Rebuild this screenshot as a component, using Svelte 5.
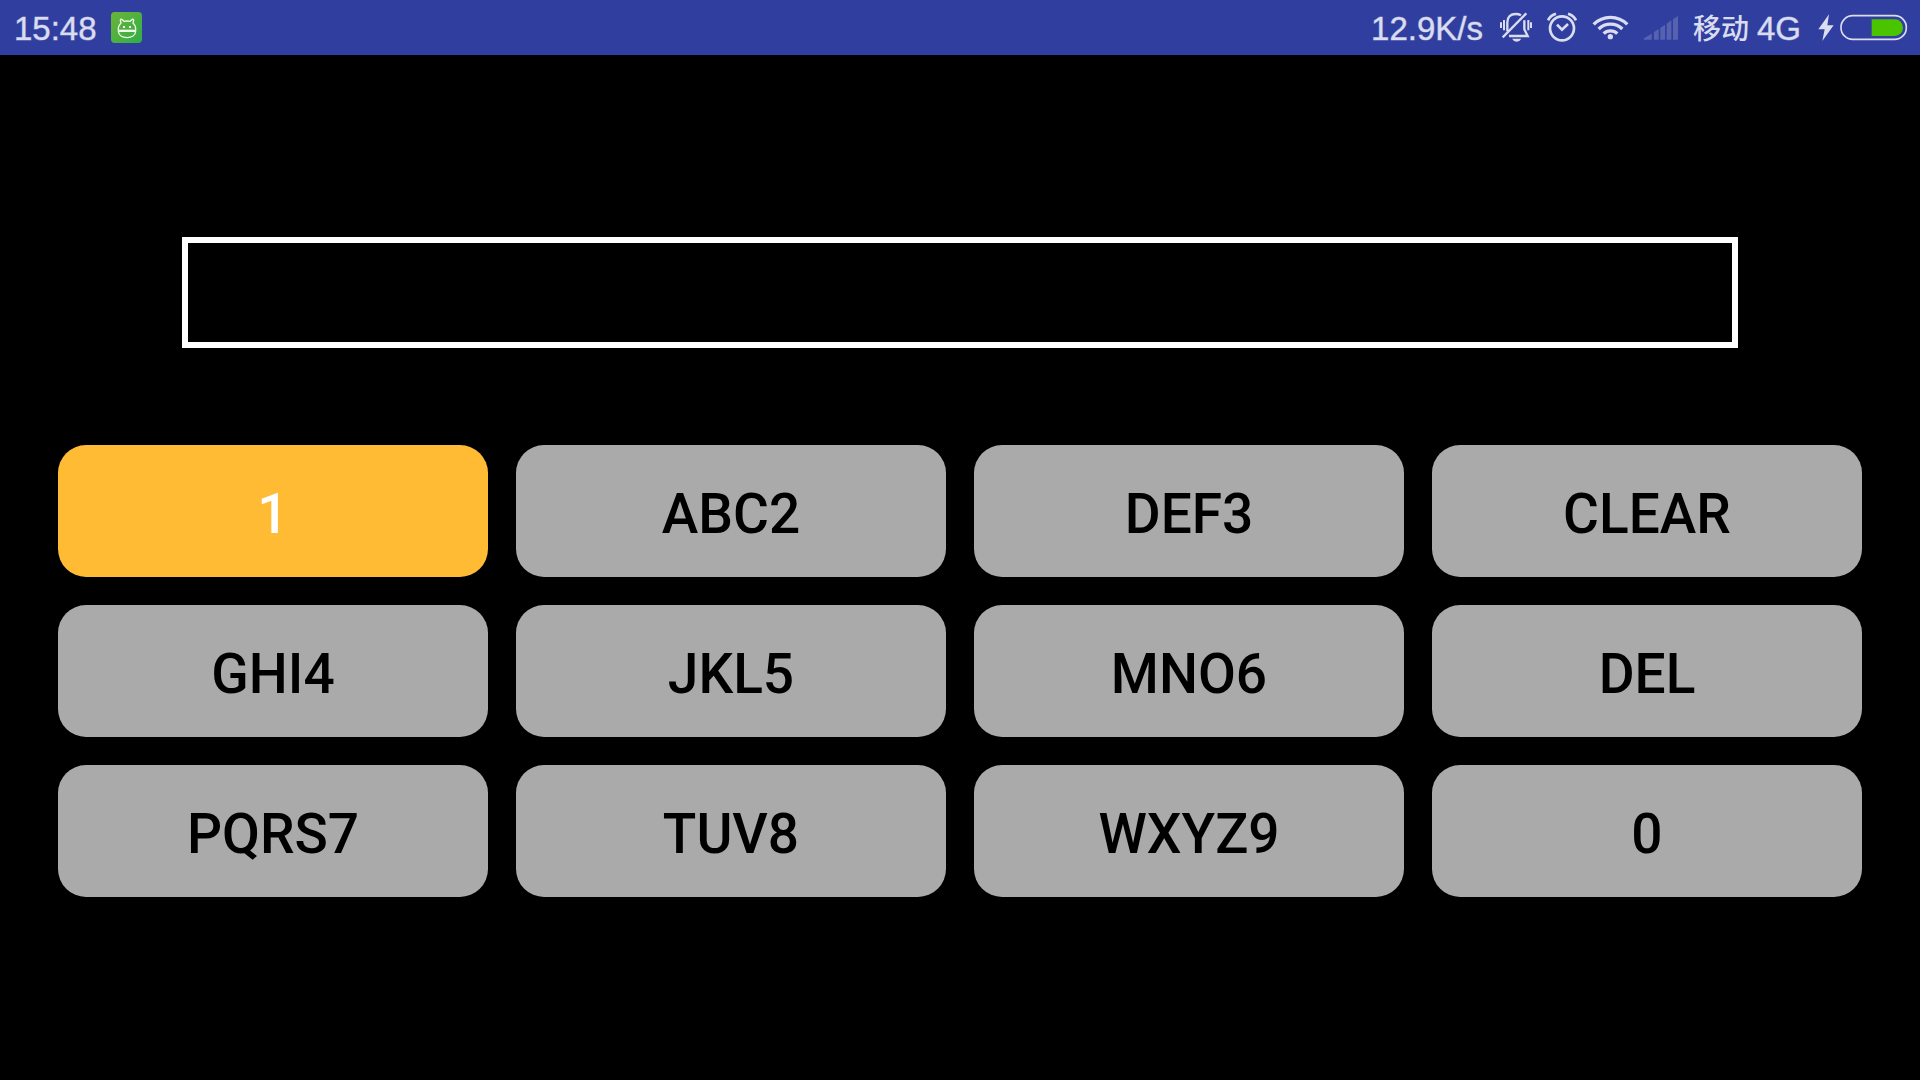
<script>
  const keys = ['1', 'ABC2', 'DEF3', 'CLEAR', 'GHI4', 'JKL5', 'MNO6', 'DEL', 'PQRS7', 'TUV8', 'WXYZ9', '0'];
  let selected = $state('1');
  let value = $state('');

  function press(key) {
    selected = key;
    if (key === 'CLEAR') value = '';
    else if (key === 'DEL') value = value.slice(0, -1);
    else value += key.slice(-1);
  }
</script>

<div class="screen">
  <header class="status">
    <div class="group left">
      <time class="text">15:48</time>
      <svg class="app" width="31" height="55" viewBox="333 0 93 165" aria-hidden="true">
        <defs>
          <linearGradient id="leaf" x1="0" y1="0" x2="1" y2="1">
            <stop offset="0" stop-color="#6cb436" />
            <stop offset="1" stop-color="#30ae48" />
          </linearGradient>
        </defs>
        <rect x="333" y="36" width="93" height="93" rx="11" fill="url(#leaf)" />
        <g fill="none" stroke="#effbe8" stroke-width="4" stroke-linejoin="round">
          <path d="M355 92C354 81 358 74 363 70L361 60Q363 56 367 59L372 64Q381 62 390 64L395 59Q399 56 401 60L399 70C404 74 408 81 407 92" />
          <path d="M355 94H407C406 106 395 113 381 113S356 106 355 94Z" />
          <path d="M355 91H407" />
        </g>
        <path d="M369 78h6v6h-6zM387 78h6v6h-6z" fill="#effbe8" />
      </svg>
    </div>

    <div class="group right">
      <span class="text">12.9K/s</span>
      <svg width="34" height="55" viewBox="24 0 102 165" aria-label="Silent" role="img">
        <g fill="none" stroke="currentColor" stroke-width="7">
          <path d="M109 40L38 112" />
          <path d="M52 94V67C52 51 62 42 77 42Q86 42 93 46" />
          <path d="M103 61V88L113 108H57" />
          <path d="M33 67V84M42 60V91M115 60V91M123 67V84" stroke-width="6" />
        </g>
        <path d="M66 116H94Q89 125 80 125T66 116Z" fill="currentColor" />
      </svg>
      <svg width="30" height="55" viewBox="171 0 90 165" aria-label="Alarm" role="img">
        <g fill="none" stroke="currentColor" stroke-width="8">
          <circle cx="216" cy="85" r="36" />
          <path d="M201 74L216 89L234 72" />
          <path d="M174 61Q181 46 198 41M234 41Q251 46 258 61" />
        </g>
      </svg>
      <svg width="37" height="55" viewBox="36 0 111 165" aria-label="Wi-Fi" role="img">
        <g fill="none" stroke="currentColor" stroke-width="10">
          <path d="M41 73A71 71 0 0 1 142 73" />
          <path d="M56 87A50 50 0 0 1 127 87" />
          <path d="M71 101A29 29 0 0 1 112 101" />
        </g>
        <circle cx="91" cy="110" r="8" fill="currentColor" />
      </svg>
      <svg width="34" height="55" viewBox="192 0 102 165" aria-label="No signal" role="img">
        <path
          d="M192 119V115L215 101V119ZM222 96L236 87V119H222ZM241 84L255 74V119H241ZM260 71L274 61V119H260ZM279 58L294 48V119H279Z"
          fill="#5662b0"
        />
      </svg>
      <span class="carrier"><span class="cjk" lang="zh-CN">移动</span><span class="text">4G</span></span>
      <svg width="92" height="55" viewBox="408 0 276 165" aria-label="Battery charging" role="img">
        <path d="M447 43L415 88H434L427 123L461 76H442Z" fill="currentColor" />
        <rect x="483" y="47" width="196" height="71" rx="35" fill="none" stroke="currentColor" stroke-width="5" />
        <path d="M575 58H645A24 25 0 0 1 645 108H575Z" fill="#4bc400" />
      </svg>
    </div>
  </header>

  <main>
    <input class="display" type="text" aria-label="Entered number" readonly {value} />
    <div class="pad">
      {#each keys as key}
        <button type="button" class:selected={key === selected} onclick={() => press(key)}>{key}</button>
      {/each}
    </div>
  </main>
</div>

<style>
  :global(body) {
    margin: 0;
    background: #000;
  }

  .screen {
    min-height: 100vh;
    background: #000;
    font-family: Roboto, 'Noto Sans CJK SC', sans-serif;
  }

  .status {
    display: flex;
    justify-content: space-between;
    padding: 0 12px 0 14px;
    background: #303f9f;
    color: #dadcef;
    font-family: 'Liberation Sans', 'Noto Sans CJK SC', sans-serif;
    font-size: 33px;
    line-height: 40px;
    white-space: nowrap;
    height: 55px;
  }

  .group {
    display: flex;
    align-items: center;
    gap: 15px;
  }

  .left {
    gap: 14px;
  }

  svg {
    display: block;
    flex: none;
  }

  .text {
    padding-top: 2px;
    -webkit-text-stroke: 1px #dadcef77;
  }

  .carrier {
    display: flex;
    align-items: center;
    gap: 8px;
  }

  .cjk {
    padding-bottom: 2px;
    font-family: 'Noto Sans CJK SC', sans-serif;
    font-size: 28px;
    font-weight: 500;
  }

  main {
    display: flex;
    flex-direction: column;
    gap: 97px;
    padding: 182px 58px;
  }

  .display {
    box-sizing: border-box;
    height: 111px;
    margin: 0 124px;
    padding: 0 24px;
    border: 6px solid #fff;
    border-radius: 0;
    outline: none;
    background: #000;
    color: #fff;
    font: 500 55px Roboto, sans-serif;
  }

  .pad {
    display: grid;
    grid-template-columns: repeat(4, 1fr);
    gap: 28px;
  }

  button {
    height: 132px;
    padding: 6px 0 0;
    border: 0;
    border-radius: 28px;
    background: #aaa;
    color: #000;
    font: 500 55px Roboto, sans-serif;
    cursor: pointer;
  }

  button.selected {
    background: #fb3;
    color: #fff;
  }
</style>
